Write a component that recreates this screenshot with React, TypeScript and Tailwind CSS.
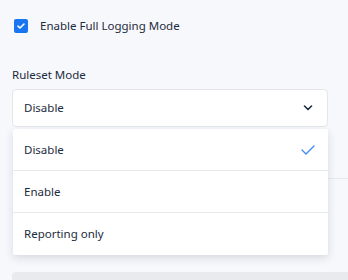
import React from "react";

export default function App() {
  const items = ["Disable", "Enable", "Reporting only"];
  return (
    <div
      className="w-[348px] h-[280px] bg-[#f7f8fc] overflow-hidden relative text-[#1d2b3e]"
      style={{ fontFamily: '"Noto Sans", "Open Sans", sans-serif' }}
    >
      <div className="absolute right-0 top-[178px] w-[30px] h-px bg-[#e6e8ee]" />
      <div className="pt-[19px] pl-[14px] flex items-center gap-[12px]">
        <div className="w-[14px] h-[14px] rounded-[2px] bg-[#1a75f0] flex items-center justify-center">
          <svg width="8" height="6" viewBox="0 0 8 6" fill="none">
            <path d="M1 3.2 L3 5 L7 1" stroke="white" strokeWidth="1.6" strokeLinecap="round" strokeLinejoin="round" />
          </svg>
        </div>
        <span className="text-[11.5px] leading-[14px]">Enable Full Logging Mode</span>
      </div>
      <div className="pl-[12px] pt-[34px] text-[11.5px] leading-[16px]">Ruleset Mode</div>
      <div className="ml-[12px] mt-[6px] w-[316px] h-[38px] bg-white border border-[#e4e6ec] rounded-[4px] flex items-center justify-between pl-[11px] pr-[14px]">
        <span className="text-[11.5px]">Disable</span>
        <svg width="10" height="6" viewBox="0 0 10 6" fill="none">
          <path d="M1.5 1 L5 4.5 L8.5 1" stroke="#1d2b3e" strokeWidth="1.6" strokeLinecap="round" strokeLinejoin="round" />
        </svg>
      </div>
      <div className="absolute left-[13px] top-[129px] w-[315px] bg-white rounded-[2px] shadow-[0_3px_8px_rgba(30,40,70,0.15)]">
        {items.map((it, i) => (
          <div
            key={it}
            className={`h-[42px] flex items-center justify-between pl-[11px] pr-[13px] ${i < items.length - 1 ? "border-b border-[#e7e8ec]" : "h-[41px]"}`}
          >
            <span className="text-[11.5px]">{it}</span>
            {i === 0 && (
              <svg width="14" height="10" viewBox="0 0 14 10" fill="none">
                <path d="M1 5 L5 9 L13 1" stroke="#3b8af5" strokeWidth="1.3" strokeLinecap="round" strokeLinejoin="round" />
              </svg>
            )}
          </div>
        ))}
      </div>
      <div className="absolute left-[12px] top-[272px] right-0 h-[20px] bg-[#e8eaee] rounded-tl-[4px]" />
    </div>
  );
}
